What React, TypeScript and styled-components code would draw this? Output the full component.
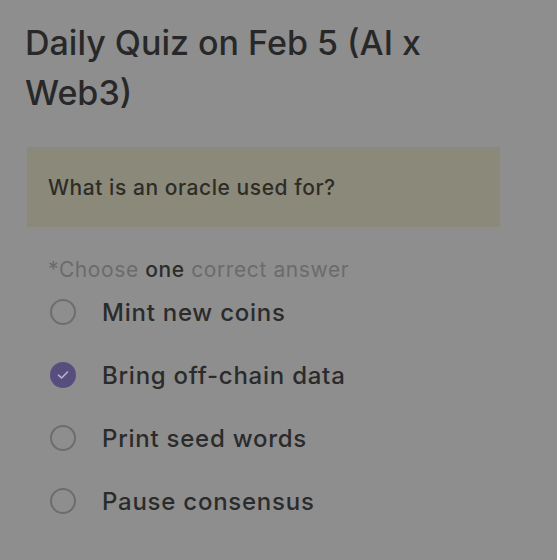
import styled, { createGlobalStyle } from 'styled-components';

const GlobalStyle = createGlobalStyle`
  html, body {
    margin: 0;
    padding: 0;
    background: #8e8e8e;
  }
  body {
    font-family: Inter, "Noto Sans", sans-serif;
    color: #2b2b2b;
  }
`;

const options = [
  { label: 'Mint new coins', checked: false },
  { label: 'Bring off-chain data', checked: true },
  { label: 'Print seed words', checked: false },
  { label: 'Pause consensus', checked: false },
];

export default function App() {
  return (
    <>
      <GlobalStyle />
      <Quiz.Page>
        <Quiz.Title>Daily Quiz on Feb 5 (AI x Web3)</Quiz.Title>
        <Quiz.Question>What is an oracle used for?</Quiz.Question>
        <Quiz.Hint>
          *Choose <b>one</b> correct answer
        </Quiz.Hint>
        <Quiz.List>
          {options.map((o) => (
            <Quiz.Option key={o.label}>
              <Quiz.Radio $checked={o.checked}>
                {o.checked && (
                  <svg width="12" height="10" viewBox="0 0 12 10">
                    <path
                      d="M1.5 5.2 L4.6 8 L10.5 2"
                      fill="none"
                      stroke="#b9b4d0"
                      strokeWidth="1.6"
                      strokeLinecap="round"
                      strokeLinejoin="round"
                    />
                  </svg>
                )}
              </Quiz.Radio>
              <Quiz.Label>{o.label}</Quiz.Label>
            </Quiz.Option>
          ))}
        </Quiz.List>
      </Quiz.Page>
    </>
  );
}

const Quiz = {
  Page: styled.div`
    width: 557px;
    height: 560px;
    box-sizing: border-box;
    padding: 18px 30px 0 25px;
    overflow: hidden;
  `,
  Title: styled.h1`
    margin: 0;
    max-width: 430px;
    font-size: 34px;
    line-height: 50px;
    font-weight: 500;
    color: #282828;
    letter-spacing: 0;
  `,
  Question: styled.div`
    margin: 29px 0 0 2px;
    width: 473px;
    height: 80px;
    box-sizing: border-box;
    padding: 0 21px;
    display: flex;
    align-items: center;
    background: #8b897a;
    font-size: 21px;
    font-weight: 500;
    letter-spacing: 0.55px;
    color: #2e2c27;
  `,
  Hint: styled.div`
    margin: 31px 0 0 23px;
    font-size: 21px;
    letter-spacing: 0.6px;
    color: #6b6b6b;
    line-height: 24px;

    b {
      font-weight: 500;
      color: #2c2c2c;
    }
  `,
  List: styled.div`
    display: flex;
    flex-direction: column;
    gap: 23px;
    margin: 10px 0 0 25px;
  `,
  Option: styled.div`
    display: flex;
    align-items: center;
    gap: 26px;
    height: 40px;
  `,
  Radio: styled.div<{ $checked: boolean }>`
    width: 26px;
    height: 26px;
    box-sizing: border-box;
    border-radius: 50%;
    border: ${(p) => (p.$checked ? 'none' : '2px solid #6d6d6d')};
    background: ${(p) => (p.$checked ? '#574e7e' : 'transparent')};
    display: flex;
    align-items: center;
    justify-content: center;
    flex-shrink: 0;
  `,
  Label: styled.span`
    font-size: 24px;
    font-weight: 500;
    letter-spacing: 0.75px;
    color: #2b2b2b;
  `,
};
